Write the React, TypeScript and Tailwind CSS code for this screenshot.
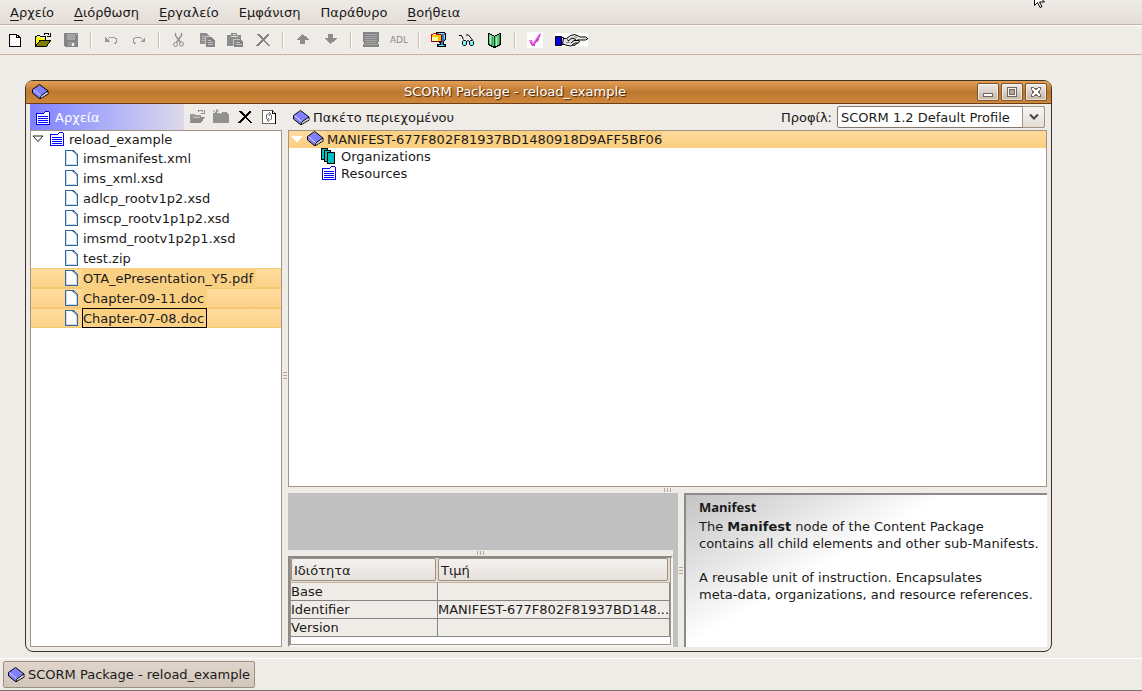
import React from 'react';

type IconProps = { className?: string };

const BookIcon: React.FC<IconProps> = ({ className }) => (
	<svg
		width="17"
		height="16"
		viewBox="0 0 17 16"
		className={className}
		aria-hidden="true"
	>
		<path d="M8 12l8-5v3l-8 5z" fill="#fff" />
		<path d="M1 5l7-4 8 6-7 5-1 3-7-6z" fill="#8080ff" />
		<path d="M1.500 5.500l7 6v2" stroke="#d8d8ff" fill="none" />
		<path
			d="M.5 5.500l7-5 8.500 6.500-7 4.800-1.200 3L.5 9z"
			stroke="#000"
			fill="none"
		/>
		<path d="M8 14.800l8.500-5M16 7v2.500" stroke="#000" fill="none" />
		<path d="M9.500 13l5-3" stroke="#b0b0b0" fill="none" />
	</svg>
);

const FolderIcon: React.FC<IconProps> = ({ className }) => (
	<svg
		width="14"
		height="14"
		viewBox="0 0 14 14"
		className={className}
		shapeRendering="crispEdges"
		aria-hidden="true"
	>
		<path
			d="M.5 13.500v-11h7l2-2h3l1 1v12z"
			fill="#fff"
			stroke="#0000ff"
		/>
		<path
			d="M2 5.500h10M2 7.500h10M2 9.500h10M2 11.500h10"
			stroke="#0000ff"
		/>
	</svg>
);

const FileIcon: React.FC<IconProps> = ({ className }) => (
	<svg
		width="13"
		height="16"
		viewBox="0 0 13 16"
		className={className}
		aria-hidden="true"
	>
		<path
			d="M.5.5h8l4 4v11H.5z"
			fill="#fff"
			stroke="#336699"
			shapeRendering="crispEdges"
		/>
		<path d="M1.500 1.500v13h10V6" fill="none" stroke="#c6dcf0" />
		<path d="M7 1l5.500 5.500V4L9 .5z" fill="#336699" />
		<path d="M8.500 2l3 3" stroke="#dbe9f6" />
	</svg>
);

const StackIcon: React.FC<IconProps> = ({ className }) => (
	<svg
		width="15"
		height="16"
		viewBox="0 0 15 16"
		className={className}
		shapeRendering="crispEdges"
		aria-hidden="true"
	>
		<g fill="#00c0c0" stroke="#000">
			<path d="M.5.500h6v11h-6z" />
			<path d="M3.500 2.500h6v11h-6z" />
			<path d="M6.500 4.500h7v11h-7z" />
		</g>
	</svg>
);

const Svg16: React.FC<{ children: React.ReactNode; crisp?: boolean }> = ({
	children,
	crisp = true,
}) => (
	<svg
		width="16"
		height="16"
		viewBox="0 0 16 16"
		fill="none"
		shapeRendering={crisp ? 'crispEdges' : undefined}
		aria-hidden="true"
	>
		{children}
	</svg>
);

const NewIcon = () => (
	<Svg16>
		<path d="M3 2h7l3 3v9H3z" fill="#fff" />
		<path d="M2.500 2.500h7l4 3v9h-11zM9.500 3v2.500H13" stroke="#000" />
	</Svg16>
);

const OpenIcon = () => (
	<Svg16>
		<path d="M1 5h3l1 1h6v3H5l-4 5z" fill="#ffff00" />
		<path d="M1 14l4-5h11l-4 5z" fill="#808000" />
		<path
			d="M.5 14.500v-10h1l1-1h2l1 1h5v4M.5 14.500h11l4-6H5l-4 5M9 2.500l1-1h3l1.500 2M15.500 1v3.500H12"
			stroke="#000"
		/>
	</Svg16>
);

const GreyOpenIcon = () => (
	<Svg16>
		<path d="M1 5h4l1 1h6v3H5l-3 5H1z" fill="#999" />
		<path d="M1 14l4-6h11l-4 6z" fill="#8c8c8c" />
		<path
			d="M2 8h2v2H2zM9 2.500l1-1h3l1.500 2M15.500 1v3.500H12"
			stroke="#8c8c8c"
		/>
		<path d="M4 8.500h7" stroke="#c4c4c4" />
	</Svg16>
);

const GreyFolderIcon = () => (
	<Svg16>
		<path d="M0 5h8l1-2h5l1 2h1v9H0z" fill="#919191" />
		<path d="M0 1l6 6M6 1 1 6M3 0v6M0 4h7" stroke="#919191" />
	</Svg16>
);

const SaveIcon = () => (
	<Svg16>
		<path d="M1 1h14v14H2l-1-1z" fill="#858585" />
		<path d="M4 2h8v6H4z" fill="#a5a5a5" />
		<path d="M5 10h7v4H5z" fill="#999" />
		<path d="M9 11h2v3H9z" fill="#eee" />
		<path d="M13 2h1v1h-1z" fill="#ddd" />
	</Svg16>
);

const UndoIcon = () => (
	<Svg16>
		<path d="M2 5v5h5z" fill="#999" />
		<path d="M5 7l2-2h4l2.500 2v3l-2 2" stroke="#999" />
	</Svg16>
);

const RedoIcon = () => (
	<Svg16>
		<path d="M14 5v5H9z" fill="#999" />
		<path d="M11 7 9 5H5L2.500 7v3l2 2" stroke="#999" />
	</Svg16>
);

const CutIcon = () => (
	<Svg16 crisp={false}>
		<path d="M4.500 1v2.500l5 7M10.500 1v2.500l-5 7" stroke="#8c8c8c" strokeWidth="1.300" />
		<circle cx="4.500" cy="12.500" r="2" stroke="#8c8c8c" />
		<circle cx="10.500" cy="12" r="2" stroke="#8c8c8c" />
	</Svg16>
);

const CopyIcon = () => (
	<Svg16>
		<path d="M1 1h6l3 3v8H1z" fill="#8f8f8f" />
		<path d="M2.500 4h4M2.500 6.500h4M2.500 8.500h4" stroke="#b5b5b5" />
		<path d="M7 5h5l4 4v6H7z" fill="#858585" />
		<path d="M8.500 8.500h3M8.500 10.500h5M8.500 12.500h5" stroke="#bdbdbd" />
		<path d="M6.500 5v8M7 4.500h4" stroke="#c9c9c9" />
	</Svg16>
);

const PasteIcon = () => (
	<Svg16>
		<path d="M0 3h4V1h6v2h4v11H0z" fill="#8c8c8c" />
		<path d="M3.500 4.500h7M5.500 2.500h3" stroke="#ddd" />
		<path d="M7 7h6l3 3v5H7z" fill="#858585" />
		<path d="M6.500 14V7.500H13M8.500 10.500h4M8.500 12.500h6" stroke="#c4c4c4" />
	</Svg16>
);

const DeleteIcon: React.FC<{ dark?: boolean }> = ({ dark }) => (
	<Svg16>
		<path
			d="M2 2h2l4 4 5-4h1v1L9.500 7.500 15 14h-2L8 9l-5 5H1v-1l5.500-5.500L1 2z"
			fill={dark ? '#000' : '#858585'}
		/>
	</Svg16>
);

const UpIcon = () => (
	<Svg16>
		<path d="M7.500 2 2 7v1h3v4h5V8h4V7z" fill="#8c8c8c" />
	</Svg16>
);

const DownIcon = () => (
	<Svg16>
		<path d="M7.500 12 2 7V6h3V2h5v4h4v1z" fill="#8c8c8c" />
	</Svg16>
);

const ScreenIcon = () => (
	<Svg16>
		<path d="M0 0h16v10h-1v2h1v3H0v-3h1v-2H0z" fill="#858585" />
		<path
			d="M2 2.500h12M2 4.500h12M2 6.500h12M2 8.500h12M3 10.500h10M1 12.500h14"
			stroke="#a5a5a5"
		/>
	</Svg16>
);

const ZipIcon = () => (
	<Svg16>
		<path
			d="M5.500.5h8l1 1v6l-2 2v3h2v2h-8v-2h3v-2h-1v-6l-3-1z"
			fill="#2a78d0"
			stroke="#000"
		/>
		<path d="M8 1.500h5M13.500 3v4" stroke="#9cd0f8" />
		<path d="M1 3h3l1-1h3l1 1h2v7H1z" fill="#ffc000" />
		<path d="M1 5h6v4H1z" fill="#ffffa0" />
		<path d="M.5 10V2.500h1l1-1h2l1 1h4" stroke="#e00000" />
		<path d="M.5 9.500h10V3" stroke="#700000" />
		<path d="M8 13.500h5" stroke="#60e0f0" />
	</Svg16>
);

const GlassesIcon = () => (
	<Svg16 crisp={false}>
		<path d="M0 3.500h2.500l2 4M7 3h2.500l4 5" stroke="#000" />
		<path
			d="M4.500 8.500h2l1 1v3l-1 1h-2l-1-1v-3zM11.500 8.500h2l1 1v3l-1 1h-2l-1-1v-3z"
			fill="#60f0ff"
			stroke="#000"
		/>
		<path d="M7.500 9.500 9 8.500l1.500 1" stroke="#000" />
		<path d="M4.500 11l1.500-1.500M11.500 11l1.500-1.500" stroke="#fff" />
	</Svg16>
);

const OpenBookIcon = () => (
	<Svg16>
		<path d="M1.500 1.500v11l6 3 6-3v-11h-1l-5 3-5-3z" fill="#60c880" stroke="#000" />
		<path d="M3.500 3v9" stroke="#a8ecb8" />
		<path d="M5.500 5v8" stroke="#38a060" />
		<path d="M7.500 5v10" stroke="#005018" />
		<path d="M9.500 5v9" stroke="#a8ecb8" />
		<path d="M12.500 3v9" stroke="#208840" />
	</Svg16>
);

const TickIcon = () => (
	<svg width="16" height="16" viewBox="0 0 16 16" aria-hidden="true">
		<path d="M0 0h16v16H0z" fill="#fff" />
		<path d="M2 8h3l1 3 6-9 2-1-1 4-6 9H5z" fill="#f060f0" />
		<path d="M3 10l3 4 7-11" stroke="#c040c0" fill="none" />
		<path d="M7 14l1-1M10 10l2-3" stroke="#606060" />
	</svg>
);

const HandIcon = () => (
	<svg
		width="33"
		height="14"
		viewBox="0 0 33 14"
		fill="none"
		aria-hidden="true"
	>
		<path d="M0 0h33v14H0z" fill="#fff" />
		<path d="M.5 3.500h6v9h-6z" fill="#0000e0" stroke="#000" />
		<path d="M6.500 4.500h2v7h-2z" fill="#fff" stroke="#000" />
		<path
			d="M8.500 5.500h3l4-3 4-1 4 1.500 2 1h5l2 1v1l-2 1h-8l2 1-1 2-2 .500-1 1.500-3 .500-2 .500-5-1-3-1.500z"
			fill="#e4e4e4"
			stroke="#000"
		/>
		<path
			d="M13 8l4-3 4 1.500M16 10l3-2.500h4M17 12l3-2h2.500M12 6.500l2 1.500"
			stroke="#000"
		/>
		<path d="M11 9.500h4M19 3.500l3 1" stroke="#808080" />
	</svg>
);

const RefreshIcon = () => (
	<Svg16>
		<path d="M1 1h10l4 4v10H1z" fill="#fff" />
		<path d="M1.500 1.500h10l3 3v10h-13z" stroke="#666" />
		<path d="M11.500 1v3.500H15" stroke="#000" />
		<path d="M14.500 5v9.500" stroke="#000" />
		<path
			d="M5.500 10V6l1-1h3M8 3l2 2-2 2M10.500 6v4l-1 1h-3M8 9l-2 2 2 2"
			stroke="#707070"
			shapeRendering="auto"
		/>
	</Svg16>
);

const Separator = () => (
	<span className="mx-[5px] h-[17px] w-0.5 border-l border-[#c9b9ab] bg-white" />
);

const ToolButton: React.FC<{
	label: string;
	wide?: boolean;
	children: React.ReactNode;
}> = ({ label, wide, children }) => (
	<button
		type="button"
		aria-label={label}
		className={
			wide
				? 'flex h-7 w-11 items-center justify-center'
				: 'flex h-7 w-7 items-center justify-center'
		}
	>
		{children}
	</button>
);

const menus = [
	{ text: 'Αρχείο', mnemonic: true },
	{ text: 'Διόρθωση', mnemonic: true },
	{ text: 'Εργαλείο', mnemonic: true },
	{ text: 'Εμφάνιση', mnemonic: false },
	{ text: 'Παράθυρο', mnemonic: false },
	{ text: 'Βοήθεια', mnemonic: true },
];

const MenuBar = () => (
	<nav className="flex h-[25px] shrink-0 gap-5 border-b border-[#c4b1a2] bg-linear-to-b from-[#efebe7] to-[#e4ddd6] pl-2.5">
		{menus.map(({ text, mnemonic }) => (
			<button key={text} type="button" className="h-6 pt-0.5">
				{mnemonic ? (
					<>
						<span className="underline underline-offset-3">
							{text[0]}
						</span>
						{text.slice(1)}
					</>
				) : (
					text
				)}
			</button>
		))}
	</nav>
);

const ToolBar = () => (
	<div className="flex h-[30px] shrink-0 items-center border-t border-b border-t-white border-b-[#c4b1a2] pl-px">
		<ToolButton label="New">
			<NewIcon />
		</ToolButton>
		<ToolButton label="Open">
			<OpenIcon />
		</ToolButton>
		<ToolButton label="Save">
			<SaveIcon />
		</ToolButton>
		<Separator />
		<ToolButton label="Undo">
			<UndoIcon />
		</ToolButton>
		<ToolButton label="Redo">
			<RedoIcon />
		</ToolButton>
		<Separator />
		<ToolButton label="Cut">
			<CutIcon />
		</ToolButton>
		<ToolButton label="Copy">
			<CopyIcon />
		</ToolButton>
		<ToolButton label="Paste">
			<PasteIcon />
		</ToolButton>
		<ToolButton label="Delete">
			<DeleteIcon />
		</ToolButton>
		<Separator />
		<ToolButton label="Move up">
			<UpIcon />
		</ToolButton>
		<ToolButton label="Move down">
			<DownIcon />
		</ToolButton>
		<Separator />
		<ToolButton label="Metadata">
			<ScreenIcon />
		</ToolButton>
		<ToolButton label="ADL">
			<span className="text-[9px] text-[#8c8c8c]">ADL</span>
		</ToolButton>
		<Separator />
		<ToolButton label="Zip package">
			<ZipIcon />
		</ToolButton>
		<ToolButton label="Preview">
			<GlassesIcon />
		</ToolButton>
		<ToolButton label="Save preview">
			<OpenBookIcon />
		</ToolButton>
		<Separator />
		<ToolButton label="Validate">
			<TickIcon />
		</ToolButton>
		<ToolButton label="Help" wide>
			<HandIcon />
		</ToolButton>
	</div>
);

const WindowButton: React.FC<{
	label: string;
	children: React.ReactNode;
}> = ({ label, children }) => (
	<button
		type="button"
		aria-label={label}
		className="flex h-[18px] w-[22px] items-center justify-center rounded-xs border border-[#75542c] bg-linear-to-b from-[#efebe7] to-[#c5b5a8] inset-ring inset-ring-white/60"
	>
		{children}
	</button>
);

const TitleBar = () => (
	<header className="flex h-[23px] shrink-0 items-center gap-0.5 rounded-t-md border-b border-[#6b4018] bg-linear-to-b from-[#e59f55] via-[#bd7830] to-[#d0873a] pr-1 pl-1.5">
		<BookIcon />
		<h1 className="min-w-0 flex-1 pl-1 text-center text-white text-shadow-[1px_1px_1px_#3d2005]">
			SCORM Package - reload_example
		</h1>
		<WindowButton label="Minimize">
			<Svg16>
				<path d="M3.500 9.500h9v3h-9z" fill="#fff" stroke="#75685c" />
			</Svg16>
		</WindowButton>
		<WindowButton label="Maximize">
			<Svg16>
				<path
					d="M3.500 3.500h9v9h-9z"
					fill="#f7f5f3"
					stroke="#75685c"
				/>
				<path
					d="M5.500 5.500h5v5h-5z"
					fill="#b5a699"
					stroke="#75685c"
				/>
			</Svg16>
		</WindowButton>
		<WindowButton label="Close">
			<Svg16>
				<path
					d="M3.500 4.500v-1h2l2.500 2 2.500-2h2v2l-2 2.500 2 2.500v2h-2l-2.500-2-2.500 2h-2v-2l2-2.500-2-2.500z"
					fill="#fff"
					stroke="#75685c"
				/>
			</Svg16>
		</WindowButton>
	</header>
);

const SmallButton: React.FC<{
	label: string;
	children: React.ReactNode;
}> = ({ label, children }) => (
	<button
		type="button"
		aria-label={label}
		className="flex h-6 w-6 items-center justify-center"
	>
		{children}
	</button>
);

const files = [
	{ name: 'imsmanifest.xml' },
	{ name: 'ims_xml.xsd' },
	{ name: 'adlcp_rootv1p2.xsd' },
	{ name: 'imscp_rootv1p1p2.xsd' },
	{ name: 'imsmd_rootv1p2p1.xsd' },
	{ name: 'test.zip' },
	{ name: 'OTA_ePresentation_Y5.pdf', selected: true },
	{ name: 'Chapter-09-11.doc', selected: true },
	{ name: 'Chapter-07-08.doc', selected: true, focused: true },
];

const FileRow: React.FC<{
	name: string;
	selected?: boolean;
	focused?: boolean;
}> = ({ name, selected, focused }) => (
	<li
		className={
			selected
				? 'flex h-5 items-center gap-1 border-y border-[#f5c76f] bg-linear-to-b from-[#ffdb9e] to-[#fcd28a] pl-[34px]'
				: 'flex h-5 items-center gap-1 pl-[34px]'
		}
	>
		<FileIcon />
		<span
			className={
				focused
					? 'h-5 border border-black bg-[#fad083] pr-0.5 leading-5'
					: selected
						? 'h-5 border border-transparent bg-[#fad083] pr-0.5 leading-5'
						: 'h-5 border border-transparent pr-0.5 leading-5'
			}
		>
			{name}
		</span>
	</li>
);

const FilesPanel = () => (
	<section className="flex min-h-0 flex-col">
		<div className="flex h-[26px] items-center">
			<div className="flex h-full flex-1 items-center gap-[5px] bg-linear-to-r from-[#8080ff] to-[#dedaea] pt-0.5 pl-1.5 text-white">
				<FolderIcon />
				Αρχεία
			</div>
			<div className="flex w-[98px] items-center pl-px">
				<SmallButton label="Import files">
					<GreyOpenIcon />
				</SmallButton>
				<SmallButton label="New folder">
					<GreyFolderIcon />
				</SmallButton>
				<SmallButton label="Delete file">
					<DeleteIcon dark />
				</SmallButton>
				<SmallButton label="Refresh">
					<RefreshIcon />
				</SmallButton>
			</div>
		</div>
		<div className="flex-1 border border-[#a39584] bg-white">
			<div className="flex h-[17px] items-start pl-px leading-[17px]">
				<svg
					width="12"
					height="8"
					viewBox="0 0 12 8"
					className="mt-1"
					aria-hidden="true"
				>
					<path d="M1 1h10L6 6.500z" fill="#fff" stroke="#222" />
				</svg>
				<FolderIcon className="mt-px ml-1.5" />
				<span className="ml-[5px]">reload_example</span>
			</div>
			<ul>
				{files.map((file) => (
					<FileRow key={file.name} {...file} />
				))}
			</ul>
		</div>
	</section>
);

const VerticalGrip = () => (
	<div className="flex flex-col items-center justify-center gap-0.5">
		<span className="h-px w-1 bg-[#b5a595]" />
		<span className="h-px w-1 bg-[#b5a595]" />
		<span className="h-px w-1 bg-[#b5a595]" />
	</div>
);

const HorizontalGrip = () => (
	<div className="flex h-1.5 shrink-0 items-center justify-center gap-0.5">
		<span className="h-1 w-px bg-[#b5a595]" />
		<span className="h-1 w-px bg-[#b5a595]" />
		<span className="h-1 w-px bg-[#b5a595]" />
	</div>
);

const PackageTree = () => (
	<>
		<div className="flex h-[26px] shrink-0 items-center justify-between pl-[5px]">
			<div className="flex items-center gap-[3px] pt-0.5">
				<BookIcon />
				Πακέτο περιεχομένου
			</div>
			<div className="flex items-center gap-[5px] pr-0.5">
				<label htmlFor="profile" className="pt-0.5">
					Προφίλ:
				</label>
				<div className="relative">
					<select
						id="profile"
						className="block h-[22px] w-[208px] appearance-none rounded-xs border border-[#85766a] bg-white pt-0.5 pl-[3px]"
					>
						<option>SCORM 1.2 Default Profile</option>
					</select>
					<span className="pointer-events-none absolute inset-y-0 right-0 flex w-[23px] items-center justify-center rounded-r-xs border border-[#a39584] bg-linear-to-b from-[#f7f5f3] to-[#e4ddd6]">
						<svg width="10" height="6" viewBox="0 0 10 6" aria-hidden="true">
							<path
								d="M1 .5l4 4 4-4"
								fill="none"
								stroke="#444"
								strokeWidth="2"
							/>
						</svg>
					</span>
				</div>
			</div>
		</div>
		<div className="min-h-0 flex-1 border border-[#a39584] bg-white leading-[17px]">
			<div className="flex h-[17px] items-start bg-linear-to-b from-[#ffdb9e] to-[#fccf80] pl-0.5">
				<svg
					width="12"
					height="7"
					viewBox="0 0 12 7"
					className="mt-[5px]"
					aria-hidden="true"
				>
					<path d="M0 0h12L6 6.500z" fill="#fff" />
				</svg>
				<BookIcon className="ml-1" />
				<span className="ml-0.5 bg-[#fad083] px-px">
					MANIFEST-677F802F81937BD1480918D9AFF5BF06
				</span>
			</div>
			<ul>
				<li className="flex h-[17px] items-start gap-[5px] pl-8">
					<StackIcon />
					Organizations
				</li>
				<li className="flex h-[17px] items-start gap-[5px] pl-[33px]">
					<FolderIcon className="mt-px" />
					Resources
				</li>
			</ul>
		</div>
	</>
);

const attributes = [
	{ name: 'Base', value: '' },
	{ name: 'Identifier', value: 'MANIFEST-677F802F81937BD148...' },
	{ name: 'Version', value: '' },
];

const AttributeTable = () => (
	<div className="flex-1 border-2 border-[#8a8a8a] border-r-[#f7f5f3] border-b-[#f7f5f3] bg-[#efebe7]">
		<div className="h-full border border-t-0 border-[#a39584] bg-white">
			<table className="w-full table-fixed border-separate border-spacing-0">
				<colgroup>
					<col className="w-[147px]" />
					<col />
				</colgroup>
				<thead>
					<tr className="h-[25px] bg-[#e4ddd6] text-left">
						{['Ιδιότητα', 'Τιμή'].map((title) => (
							<th
								key={title}
								className="border-b border-[#c4b1a2] p-0 pr-0.5 pb-px font-normal"
							>
								<div className="h-[23px] rounded-xs border border-[#a09080] bg-linear-to-b from-[#f4f2f0] to-[#e6e0da] pl-0.5 leading-[23px]">
									{title}
								</div>
							</th>
						))}
					</tr>
				</thead>
				<tbody className="bg-[#efebe7]">
					{attributes.map(({ name, value }) => (
						<tr key={name}>
							<td className="h-[18px] border-r border-b border-[#858585] p-0 leading-[17px]">
								{name}
							</td>
							<td className="h-[18px] border-r border-b border-[#858585] p-0 leading-[17px] whitespace-nowrap">
								{value}
							</td>
						</tr>
					))}
				</tbody>
			</table>
		</div>
	</div>
);

const Description = () => (
	<article className="border-t-2 border-l-2 border-[#8a8a8a] bg-white bg-[linear-gradient(150deg,#c4c4c4_0%,#ffffff_42%)] pt-1 pl-[13px] leading-[17px]">
		<h2 className="font-['Noto_Sans'] text-[13px] font-bold">Manifest</h2>
		<p className="mt-0.5">
			The <b>Manifest</b> node of the Content Package
			<br />
			contains all child elements and other sub-Manifests.
		</p>
		<p className="mt-[17px]">
			A reusable unit of instruction. Encapsulates
			<br />
			meta-data, organizations, and resource references.
		</p>
	</article>
);

const PackageWindow = () => (
	<main className="flex min-h-0 flex-1 flex-col rounded-lg border border-[#3b322b] bg-[#efebe7]">
		<TitleBar />
		<div className="grid min-h-0 flex-1 grid-cols-[252px_6px_minmax(0,1fr)] pr-1 pb-1 pl-1">
			<FilesPanel />
			<VerticalGrip />
			<section className="flex min-h-0 flex-col">
				<PackageTree />
				<HorizontalGrip />
				<div className="grid h-[154px] shrink-0 grid-cols-[390px_6px_minmax(0,1fr)]">
					<div className="flex flex-col bg-[#c0c0c0] pr-[5px]">
						<div className="h-[57px]" />
						<div className="bg-[#efebe7]">
							<HorizontalGrip />
						</div>
						<AttributeTable />
					</div>
					<VerticalGrip />
					<Description />
				</div>
			</section>
		</div>
	</main>
);

const TaskBar = () => (
	<footer className="flex h-[33px] shrink-0 border-t border-b border-t-white border-b-[#7a7068] pt-0.5 pl-[3px]">
		<button
			type="button"
			className="flex h-[27px] items-center gap-[3px] rounded-xs border border-[#9c8e82] bg-linear-to-b from-[#e0d5cc] to-[#d2c6bb] px-1"
		>
			<BookIcon />
			SCORM Package - reload_example
		</button>
	</footer>
);

const App: React.FC = () => (
	<div className="relative flex h-screen min-h-[480px] flex-col overflow-hidden bg-[#efebe7] font-['DejaVu_Sans',sans-serif] text-[13px] leading-4 text-[#1a1a1a]">
		<MenuBar />
		<ToolBar />
		<div className="flex min-h-0 flex-1 flex-col pt-[25px] pr-[90px] pb-1.5 pl-[25px]">
			<PackageWindow />
		</div>
		<TaskBar />
		<svg
			width="14"
			height="8"
			viewBox="0 0 14 8"
			className="absolute top-0 right-[94px]"
			aria-hidden="true"
		>
			<path
				d="M.5-8v13.500l3-3L6 7.500l2-1-2.500-4.500h5z"
				fill="#fff"
				stroke="#000"
			/>
		</svg>
	</div>
);

export default App;
